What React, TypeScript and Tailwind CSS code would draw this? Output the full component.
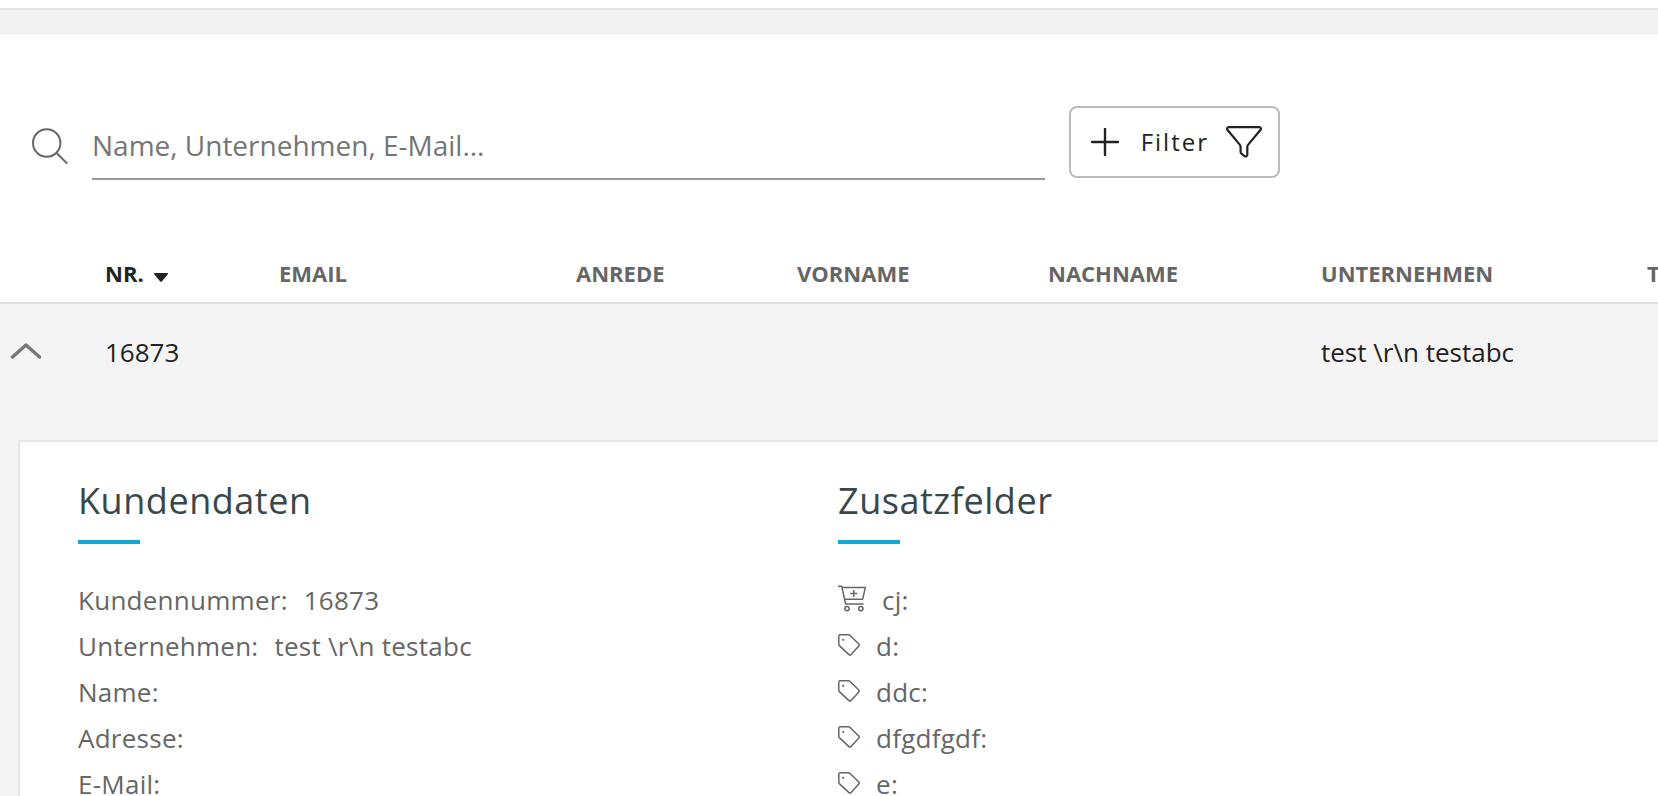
import React, { useState } from "react";
import clsx from "clsx";

const columns = [
  { key: "nr", label: "Nr.", width: "w-[174px]" },
  { key: "email", label: "Email", width: "w-[297px]" },
  { key: "anrede", label: "Anrede", width: "w-[221px]" },
  { key: "vorname", label: "Vorname", width: "w-[251px]" },
  { key: "nachname", label: "Nachname", width: "w-[273px]" },
  { key: "unternehmen", label: "Unternehmen", width: "w-[326px]" },
  { key: "telefon", label: "Telefon", width: "" },
];

const customer: Record<string, string> = {
  nr: "16873",
  unternehmen: "test \\r\\n testabc",
};

const details = [
  { label: "Kundennummer", value: customer.nr },
  { label: "Unternehmen", value: customer.unternehmen },
  { label: "Name", value: "" },
  { label: "Adresse", value: "" },
  { label: "E-Mail", value: "" },
];

const extraFields = [
  { label: "cj", icon: "cart" },
  { label: "d", icon: "tag" },
  { label: "ddc", icon: "tag" },
  { label: "dfgdfgdf", icon: "tag" },
  { label: "e", icon: "tag" },
];

function SearchIcon() {
  return (
    <svg className="mt-4 h-9 w-9 shrink-0 text-[#666]" viewBox="0 0 36 36" fill="none" stroke="currentColor" strokeWidth="2" aria-hidden="true">
      <circle cx="14.7" cy="15" r="13.7" />
      <path d="M24.3 24.8 35.3 35.6" />
    </svg>
  );
}

function PlusIcon() {
  return (
    <svg className="h-7 w-7" viewBox="0 0 28 28" fill="none" stroke="currentColor" strokeWidth="2.4" strokeLinecap="round" aria-hidden="true">
      <path d="M14 1v26M1 14h26" />
    </svg>
  );
}

function FunnelIcon() {
  return (
    <svg className="h-8 w-9" viewBox="0 0 36 32" fill="none" stroke="currentColor" strokeWidth="2.2" strokeLinejoin="round" aria-hidden="true">
      <path d="M2.8 1.2h30.4c1.7 0 2.2 1.6 1.2 2.8L22.2 18.6c-.6.7-.9 1.4-.9 2.3v7.8c0 1.6-1.4 2.3-2.7 1.4l-2.9-2.2c-.8-.6-1.1-1.2-1.1-2.1v-4.9c0-.9-.3-1.6-.9-2.3L1.6 4C.6 2.8 1.1 1.2 2.8 1.2Z" />
    </svg>
  );
}

function CartIcon() {
  return (
    <svg className="h-7 w-7" viewBox="0 0 28 28" fill="none" stroke="currentColor" strokeWidth="1.5" strokeLinejoin="round" aria-hidden="true">
      <path d="M0 1.3h3.8L7.6 19h18M4.4 2.4h23l-2.8 11.8H6.8" />
      <path d="M15.8 5v7M12.3 8.5h7" />
      <circle cx="9" cy="23.6" r="2.2" />
      <circle cx="22.8" cy="23.6" r="2.2" />
    </svg>
  );
}

function TagIcon() {
  return (
    <svg className="h-[22px] w-[22px]" viewBox="0 0 22 22" fill="none" stroke="currentColor" strokeWidth="1.5" strokeLinejoin="round" aria-hidden="true">
      <path d="M2.2.8h8.3c.5 0 .9.2 1.3.5l8.8 8.4c.8.8.8 1.7 0 2.5l-7.5 8.2c-.8.8-1.6.8-2.4 0L1.3 11.6c-.4-.4-.5-.8-.5-1.3V2.2C.8 1.3 1.3.8 2.2.8Z" />
      <circle cx="5.2" cy="5.8" r="1.1" fill="currentColor" stroke="none" />
    </svg>
  );
}

function SectionTitle({ children }: { children: React.ReactNode }) {
  return (
    <>
      <h2 className="text-[36px] leading-[50px] tracking-[0.015em] text-[#37474a]">{children}</h2>
      <div className="mt-3.5 mb-[33px] h-1 w-[62px] bg-[#0daad7]" />
    </>
  );
}

export default function App() {
  const [query, setQuery] = useState("");
  const [open, setOpen] = useState(true);

  return (
    <div className="h-screen overflow-hidden bg-white font-['Open_Sans',sans-serif] text-[#222]">
      <div className="mt-2 h-[26px] border-t-2 border-b border-t-[#e6e6e6] border-b-[#ececec] bg-[#f2f2f2]" />

      <form className="mt-[72px] flex w-full max-w-[1280px] pl-8" onSubmit={(e) => e.preventDefault()}>
        <label htmlFor="customer-search" className="pt-1.5" aria-label="Suche">
          <SearchIcon />
        </label>
        <input
          id="customer-search"
          type="text"
          value={query}
          onChange={(e) => setQuery(e.target.value)}
          placeholder="Name, Unternehmen, E-Mail..."
          className="mt-1.5 ml-6 h-[68px] min-w-0 flex-1 border-b-2 border-[#999] text-[28px] outline-none placeholder:text-[#757575]"
        />
        <button type="button" className="ml-6 flex h-[72px] items-center rounded-lg border-2 border-[#bbb] pr-4 pl-5 text-2xl tracking-[2px]">
          <PlusIcon />
          <span className="mr-[17px] ml-[22px]">Filter</span>
          <FunnelIcon />
        </button>
      </form>

      <table className="mt-16 w-full table-fixed border-collapse text-left">
        <thead>
          <tr className="h-[59px] border-b-2 border-[#dedede] text-[22px] whitespace-nowrap text-[#666] uppercase">
            <th className="w-[105px]" aria-label="Details" />
            {columns.map((col) => (
              <th key={col.key} className={clsx("p-0 font-bold", col.width, col.key === "nr" && "text-[#222]")}>
                {col.key === "nr" ? (
                  <button type="button" className="flex items-center gap-2.5 uppercase">
                    {col.label}
                    <svg className="mt-2 h-[9px] w-[14px]" viewBox="0 0 14 9" fill="currentColor" aria-hidden="true">
                      <path d="M1 0h12c1 0 1.3.8.6 1.5L8 8.3c-.6.7-1.4.7-2 0L.4 1.5C-.3.8 0 0 1 0Z" />
                    </svg>
                  </button>
                ) : (
                  col.label
                )}
              </th>
            ))}
          </tr>
        </thead>
        <tbody className="bg-[#f4f4f4]">
          <tr className="h-[98px] text-[26px] whitespace-nowrap">
            <td className="p-0 pb-1 pl-2.5">
              <button type="button" className="block text-[#777]" aria-expanded={open} aria-label="Details umschalten" onClick={() => setOpen(!open)}>
                <svg className={clsx("h-4 w-8", !open && "rotate-180")} viewBox="0 0 32 16" fill="none" stroke="currentColor" strokeWidth="3.4" strokeLinecap="round" strokeLinejoin="round">
                  <path d="M2.5 14 16 2l13.5 12" />
                </svg>
              </button>
            </td>
            {columns.map((col) => (
              <td key={col.key} className="p-0">{customer[col.key]}</td>
            ))}
          </tr>
          {open && (
            <tr>
              <td colSpan={8} className="p-0 pt-[39px] pl-[18px]">
                <div className="grid grid-cols-2 border-t-2 border-l-2 border-[#e6e7e8] bg-white pt-[34px] pr-[60px] pl-[58px]">
                  <section>
                    <SectionTitle>Kundendaten</SectionTitle>
                    <dl className="text-[26px] leading-[46px] tracking-[0.01em] text-[#666]">
                      {details.map((row) => (
                        <div key={row.label} className="flex gap-4">
                          <dt>{row.label}:</dt>
                          <dd>{row.value}</dd>
                        </div>
                      ))}
                    </dl>
                  </section>
                  <section>
                    <SectionTitle>Zusatzfelder</SectionTitle>
                    <ul className="text-[26px] leading-[46px] tracking-[0.01em] text-[#666]">
                      {extraFields.map((field) => (
                        <li key={field.label} className="flex gap-4">
                          <span className={field.icon === "cart" ? "pt-2" : "pt-[11px]"}>
                            {field.icon === "cart" ? <CartIcon /> : <TagIcon />}
                          </span>
                          {field.label}:
                        </li>
                      ))}
                    </ul>
                  </section>
                </div>
              </td>
            </tr>
          )}
        </tbody>
      </table>
    </div>
  );
}
